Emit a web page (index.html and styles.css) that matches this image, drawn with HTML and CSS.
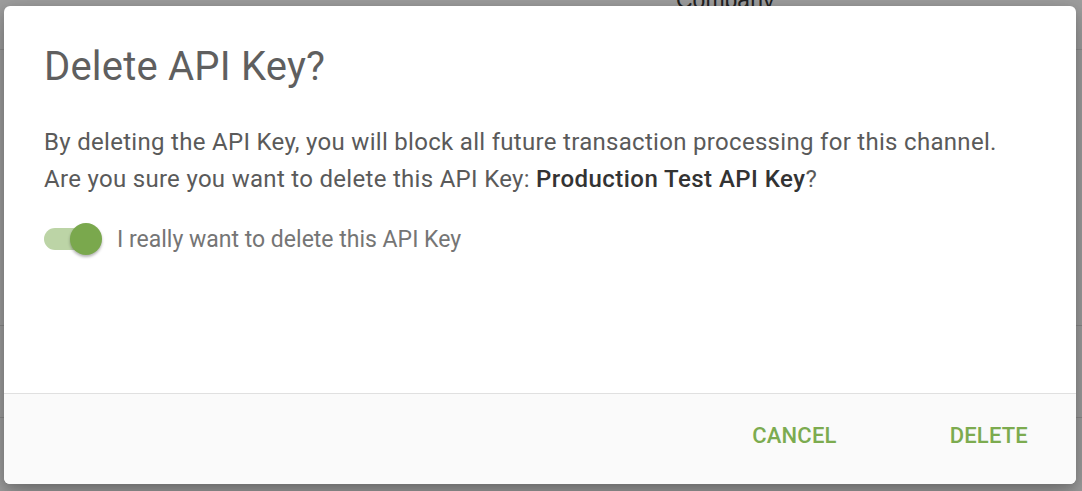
FILE: index.html
```html
<!DOCTYPE html>
<html>
<head>
<meta charset="utf-8">
<link rel="stylesheet" href="styles.css">
</head>
<body>
<div class="page">
  <div class="page-head"><span class="page-label">Company</span></div>
  <div class="page-row r1"></div>
  <div class="page-row r2"></div>
</div>
<div class="dialog">
  <div class="dialog-body">
    <h1 class="dialog-title">Delete API Key?</h1>
    <p class="dialog-text">By deleting the API Key, you will block all future transaction processing for this channel.<br>Are you sure you want to delete this API Key: <strong>Production Test API Key</strong>?</p>
    <label class="toggle-row">
      <span class="toggle"><span class="toggle-track"></span><span class="toggle-thumb"></span></span>
      <span class="toggle-label">I really want to delete this API Key</span>
    </label>
  </div>
  <div class="dialog-footer">
    <button class="btn">CANCEL</button>
    <button class="btn">DELETE</button>
  </div>
</div>
</body>
</html>
```
FILE: styles.css
```css
html, body {
  margin: 0;
  padding: 0;
  height: 100%;
}
body {
  background: #9e9e9e;
  font-family: Roboto, "Liberation Sans", sans-serif;
  overflow: hidden;
}
.page {
  height: 100%;
}
.page-head {
  height: 49px;
  border-bottom: 1px solid #8e8e8e;
  position: relative;
}
.page-label {
  position: absolute;
  left: 676px;
  top: -13px;
  font-size: 23px;
  color: #222;
  font-family: "Liberation Sans", sans-serif;
}
.page-row {
  border-bottom: 1px solid #8a8a8a;
}
.r1 { height: 275px; }
.r2 { height: 91px; }
.dialog {
  position: absolute;
  left: 4px;
  top: 6px;
  width: 1072px;
  height: 478px;
  background: #fff;
  border-radius: 6px;
  box-shadow: 0 10px 30px rgba(0,0,0,0.25), 0 4px 10px rgba(0,0,0,0.15);
  display: flex;
  flex-direction: column;
  overflow: hidden;
}
.dialog-body {
  flex: 1;
  padding: 0 40px;
}
.dialog-title {
  margin: 37px 0 0 0;
  font-size: 40px;
  font-weight: 400;
  color: #5f5f5f;
  line-height: 48px;
  letter-spacing: 0.2px;
}
.dialog-text {
  margin: 33px 0 0 0;
  font-size: 24px;
  line-height: 37px;
  color: #5a5a5a;
  letter-spacing: 0.3px;
}
.dialog-text strong {
  font-weight: 500;
  color: #333;
  letter-spacing: 0.45px;
}
.toggle-row {
  display: flex;
  align-items: center;
  gap: 14px;
  margin-top: 25px;
}
.toggle {
  position: relative;
  width: 59px;
  height: 32px;
  display: block;
}
.toggle-track {
  position: absolute;
  left: 0;
  top: 5px;
  width: 56px;
  height: 22px;
  border-radius: 11px;
  background: #bcd4a6;
}
.toggle-thumb {
  position: absolute;
  left: 26px;
  top: 0;
  width: 32px;
  height: 32px;
  border-radius: 50%;
  background: #7aa84d;
  box-shadow: 0 2px 3px rgba(0,0,0,0.3);
}
.toggle-label {
  font-size: 23px;
  color: #757575;
}
.dialog-footer {
  height: 91px;
  box-sizing: border-box;
  border-top: 1px solid #e0e0e0;
  background: #fafafa;
  display: flex;
  justify-content: flex-end;
  align-items: center;
  padding: 0 36px 7px 0;
  gap: 89px;
}
.btn {
  border: 0;
  background: transparent;
  font-family: Roboto, "Liberation Sans", sans-serif;
  font-size: 22px;
  font-weight: 500;
  color: #7cab4f;
  padding: 8px 12px;
  letter-spacing: 0.2px;
}
```
